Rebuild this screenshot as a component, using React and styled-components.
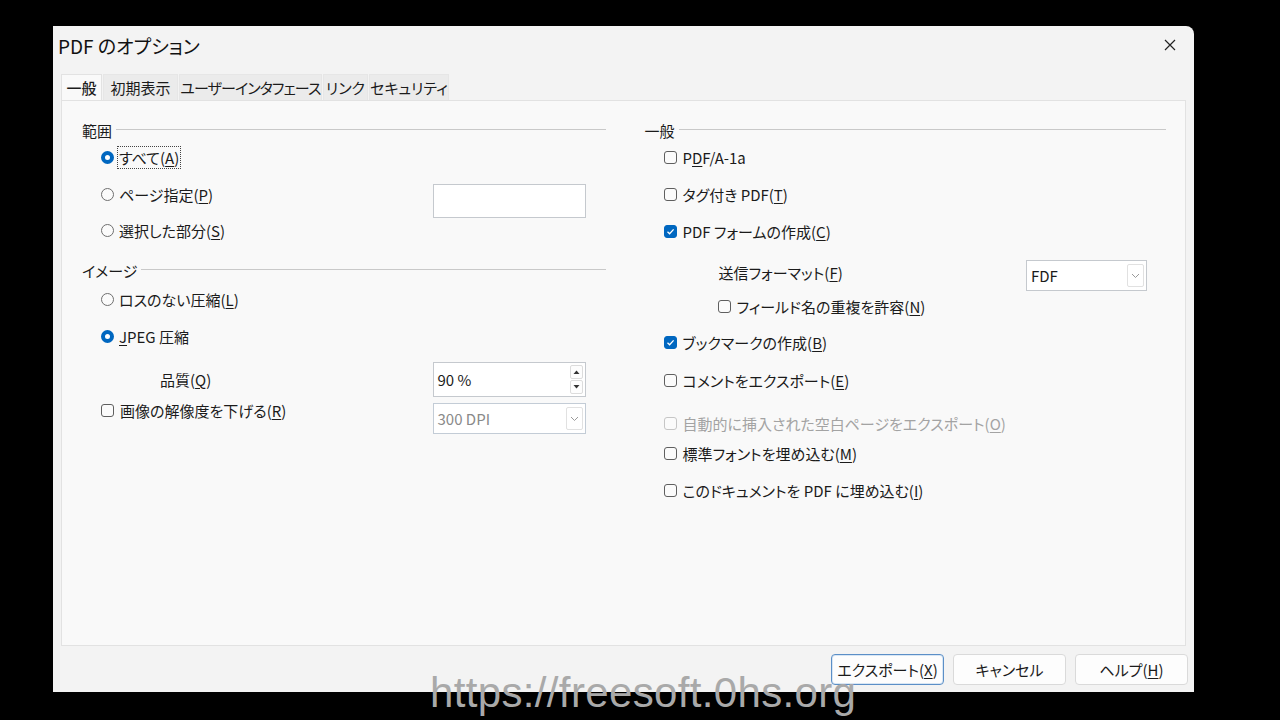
import React from "react";
import styled, { createGlobalStyle } from "styled-components";

const GlobalStyle = createGlobalStyle`
    html, body {
        margin: 0;
        padding: 0;
        background: #000000;
    }
    body {
        font-family: "Noto Sans CJK JP", "Noto Sans", sans-serif;
        font-feature-settings: "palt";
        color: #1b1b1b;
    }
    * {
        box-sizing: border-box;
    }
`;

const Page = styled.div`
    position: relative;
    width: 1280px;
    height: 720px;
    padding: 26px 0 0 53px;
    overflow: hidden;
`;

const Dialog = styled.div`
    display: flex;
    flex-direction: column;
    width: 1141px;
    height: 666px;
    background: #f3f3f3;
    border-radius: 0 8px 0 0;
`;

const TitleBar = styled.div`
    display: flex;
    align-items: center;
    justify-content: space-between;
    height: 38px;
    padding: 0 18px 0 5px;
    font-size: 19px;
    color: #111111;
`;

const CloseIcon = styled.svg`
    width: 12px;
    height: 12px;
`;

const TabBar = styled.div`
    display: flex;
    height: 26px;
    margin: 10px 8px 0;
`;

const Tab = styled.div`
    display: flex;
    align-items: center;
    justify-content: center;
    width: ${(p) => p.$w}px;
    margin-right: 1px;
    font-size: 15px;
    letter-spacing: ${(p) => (p.$tight ? "-0.9px" : "0")};
    white-space: nowrap;
    font-weight: ${(p) => (p.$active ? 500 : 400)};
    background: ${(p) => (p.$active ? "#f9f9f9" : "#ebebeb")};
    border: 1px solid ${(p) => (p.$active ? "#e2e2e2" : "#e6e6e6")};
    border-bottom: none;
    color: #1b1b1b;
`;

const Panel = styled.div`
    flex: 1;
    display: flex;
    gap: 39px;
    margin: 0 8px;
    padding: 16px 19px 0 20px;
    background: #f9f9f9;
    border: 1px solid #e2e2e2;
`;

const Column = styled.div`
    display: flex;
    flex-direction: column;
    width: ${(p) => p.$w}px;
`;

const Header = styled.div`
    display: flex;
    align-items: center;
    gap: 4px;
    height: 26px;
    margin-top: ${(p) => p.$mt || 0}px;
    font-size: 15px;

    &::after {
        content: "";
        flex: 1;
        height: 1px;
        margin-top: -1px;
        background: #c9c9c9;
    }
`;

const Row = styled.div`
    display: flex;
    align-items: center;
    height: ${(p) => p.$h || 26}px;
    margin-top: ${(p) => p.$mt || 0}px;
    padding-left: ${(p) => p.$indent || 19}px;
    font-size: 15px;
    color: ${(p) => (p.$disabled ? "#a3a3a3" : "#1b1b1b")};
`;

const Label = styled.span`
    display: inline-flex;
    align-items: center;
    flex-shrink: 0;
    padding: 0 1px;
    border: 1px dotted ${(p) => (p.$focus ? "#444444" : "transparent")};

    & u {
        text-underline-offset: 2px;
    }
`;

const Radio = styled.span`
    width: 13px;
    height: 13px;
    margin-right: 3px;
    border-radius: 50%;
    flex-shrink: 0;
    background: ${(p) => (p.$on ? "#ffffff" : "#fbfbfb")};
    border: ${(p) => (p.$on ? "4px solid #0067c0" : "1px solid #6f6f6f")};
`;

const Check = styled.span`
    display: flex;
    align-items: center;
    justify-content: center;
    width: 13px;
    height: 13px;
    margin-right: 4px;
    flex-shrink: 0;
    border-radius: 3px;
    background: ${(p) => (p.$on ? "#0067c0" : "#fbfbfb")};
    border: 1px solid
        ${(p) => (p.$on ? "#0067c0" : p.$disabled ? "#c6c6c6" : "#5f5f5f")};
`;

const Field = styled.div`
    display: flex;
    align-items: center;
    align-self: flex-start;
    width: ${(p) => p.$w}px;
    height: ${(p) => p.$h}px;
    margin-top: ${(p) => p.$mt || 0}px;
    margin-left: auto;
    margin-right: ${(p) => p.$mr || 20}px;
    flex-shrink: 0;
    padding-left: 4px;
    background: #ffffff;
    border: 1px solid ${(p) => (p.$disabled ? "#c3ccd6" : "#c5c9ce")};
    font-size: 15px;
    color: ${(p) => (p.$disabled ? "#8a8a8a" : "#1b1b1b")};
`;

const FieldText = styled.span`
    flex: 1;
`;

const DropButton = styled.span`
    display: flex;
    align-items: center;
    justify-content: center;
    width: 17px;
    height: calc(100% - 6px);
    margin-right: 2px;
    border: 1px solid #e1e1e1;
    border-radius: 2px;
`;

const SpinButtons = styled.span`
    display: flex;
    flex-direction: column;
    gap: 1px;
    margin-right: 2px;
`;

const SpinButton = styled.span`
    display: flex;
    align-items: center;
    justify-content: center;
    width: 13px;
    height: 14px;
    border: 1px solid #dcdcdc;
    border-radius: 2px;
    background: #fdfdfd;
`;

const ButtonBar = styled.div`
    display: flex;
    align-items: center;
    justify-content: flex-end;
    gap: 9px;
    height: 46px;
    padding-right: 6px;
`;

const Button = styled.button`
    width: 113px;
    height: 31px;
    padding: 0;
    border-radius: 4px;
    background: #fdfdfd;
    border: 1px solid ${(p) => (p.$primary ? "#5b8fc7" : "#dadada")};
    box-shadow: ${(p) => (p.$primary ? "inset 0 0 0 1px #d8e6f4" : "none")};
    font-family: inherit;
    font-feature-settings: "palt";
    font-size: 15px;
    color: #1b1b1b;

    & u {
        text-underline-offset: 2px;
    }
`;

const Watermark = styled.div`
    position: absolute;
    left: 430px;
    top: 672px;
    font-family: "Liberation Sans", Arial, sans-serif;
    font-size: 42px;
    line-height: 42px;
    letter-spacing: 0.35px;
    color: #a9a9a9;
    white-space: nowrap;
`;

const Tick = () => (
    <svg width="9" height="9" viewBox="0 0 9 9">
        <path d="M1.5 4.8 L3.6 6.8 L7.6 2.4" fill="none" stroke="#ffffff" strokeWidth="1.3" />
    </svg>
);

const Chevron = () => (
    <svg width="9" height="6" viewBox="0 0 9 6">
        <path d="M1 1 L4.5 4.5 L8 1" fill="none" stroke="#9a9a9a" strokeWidth="1" />
    </svg>
);

const Tri = ({ up }) => (
    <svg width="7" height="4" viewBox="0 0 7 4">
        <path d={up ? "M0.5 4 L3.5 0.5 L6.5 4 Z" : "M0.5 0 L3.5 3.5 L6.5 0 Z"} fill="#333333" />
    </svg>
);

const Select = ({ value, w, h, mt, mr, disabled }) => (
    <Field $w={w} $h={h} $mt={mt} $mr={mr} $disabled={disabled}>
        <FieldText>{value}</FieldText>
        <DropButton>
            <Chevron />
        </DropButton>
    </Field>
);

const tabs = [
    { label: "一般", w: 41, active: true },
    { label: "初期表示", w: 75 },
    { label: "ユーザーインタフェース", w: 143, tight: true },
    { label: "リンク", w: 45 },
    { label: "セキュリティ", w: 80 },
];

export default function App() {
    return (
        <Page>
            <GlobalStyle />
            <Dialog>
                <TitleBar>
                    <span>PDF のオプション</span>
                    <CloseIcon viewBox="0 0 12 12">
                        <path d="M1 1 L11 11 M11 1 L1 11" stroke="#222222" strokeWidth="1.2" />
                    </CloseIcon>
                </TitleBar>
                <TabBar>
                    {tabs.map((t) => (
                        <Tab key={t.label} $w={t.w} $active={t.active} $tight={t.tight}>
                            {t.label}
                        </Tab>
                    ))}
                </TabBar>
                <Panel>
                    <Column $w={524}>
                        <Header>範囲</Header>
                        <Row $mt={1}>
                            <Radio $on />
                            <Label $focus>
                                すべて(<u>A</u>)
                            </Label>
                        </Row>
                        <Row $mt={11}>
                            <Radio />
                            <Label>
                                ページ指定(<u>P</u>)
                            </Label>
                            <Field $w={153} $h={34} $mt={3} />
                        </Row>
                        <Row $mt={10}>
                            <Radio />
                            <Label>
                                選択した部分(<u>S</u>)
                            </Label>
                        </Row>
                        <Header $mt={14}>イメージ</Header>
                        <Row $mt={3}>
                            <Radio />
                            <Label>
                                ロスのない圧縮(<u>L</u>)
                            </Label>
                        </Row>
                        <Row $mt={11}>
                            <Radio $on />
                            <Label>
                                <u>J</u>PEG 圧縮
                            </Label>
                        </Row>
                        <Row $mt={13} $h={35} $indent={76}>
                            <Label>
                                品質(<u>Q</u>)
                            </Label>
                            <Field $w={153} $h={35}>
                                <FieldText>90 %</FieldText>
                                <SpinButtons>
                                    <SpinButton>
                                        <Tri up />
                                    </SpinButton>
                                    <SpinButton>
                                        <Tri />
                                    </SpinButton>
                                </SpinButtons>
                            </Field>
                        </Row>
                        <Row $mt={0}>
                            <Check />
                            <Label>
                                画像の解像度を下げる(<u>R</u>)
                            </Label>
                            <Select value="300 DPI" w={153} h={31} mt={6} disabled />
                        </Row>
                    </Column>
                    <Column $w={522}>
                        <Header>一般</Header>
                        <Row $mt={1}>
                            <Check />
                            <Label>
                                P<u>D</u>F/A-1a
                            </Label>
                        </Row>
                        <Row $mt={11}>
                            <Check />
                            <Label>
                                タグ付き PDF(<u>T</u>)
                            </Label>
                        </Row>
                        <Row $mt={11}>
                            <Check $on>
                                <Tick />
                            </Check>
                            <Label>
                                PDF フォームの作成(<u>C</u>)
                            </Label>
                        </Row>
                        <Row $mt={15} $indent={72}>
                            <Label>
                                送信フォーマット(<u>F</u>)
                            </Label>
                            <Select value="FDF" w={121} h={31} mt={1} mr={19} />
                        </Row>
                        <Row $mt={8} $indent={73}>
                            <Check />
                            <Label>
                                フィールド名の重複を許容(<u>N</u>)
                            </Label>
                        </Row>
                        <Row $mt={10}>
                            <Check $on>
                                <Tick />
                            </Check>
                            <Label>
                                ブックマークの作成(<u>B</u>)
                            </Label>
                        </Row>
                        <Row $mt={12}>
                            <Check />
                            <Label>
                                コメントをエクスポート(<u>E</u>)
                            </Label>
                        </Row>
                        <Row $mt={17} $disabled>
                            <Check $disabled />
                            <Label>
                                自動的に挿入された空白ページをエクスポート(<u>O</u>)
                            </Label>
                        </Row>
                        <Row $mt={4}>
                            <Check />
                            <Label>
                                標準フォントを埋め込む(<u>M</u>)
                            </Label>
                        </Row>
                        <Row $mt={11}>
                            <Check />
                            <Label>
                                このドキュメントを PDF に埋め込む(<u>I</u>)
                            </Label>
                        </Row>
                    </Column>
                </Panel>
                <ButtonBar>
                    <Button $primary>
                        エクスポート(<u>X</u>)
                    </Button>
                    <Button>キャンセル</Button>
                    <Button>
                        ヘルプ(<u>H</u>)
                    </Button>
                </ButtonBar>
            </Dialog>
            <Watermark>https://freesoft.0hs.org</Watermark>
        </Page>
    );
}
